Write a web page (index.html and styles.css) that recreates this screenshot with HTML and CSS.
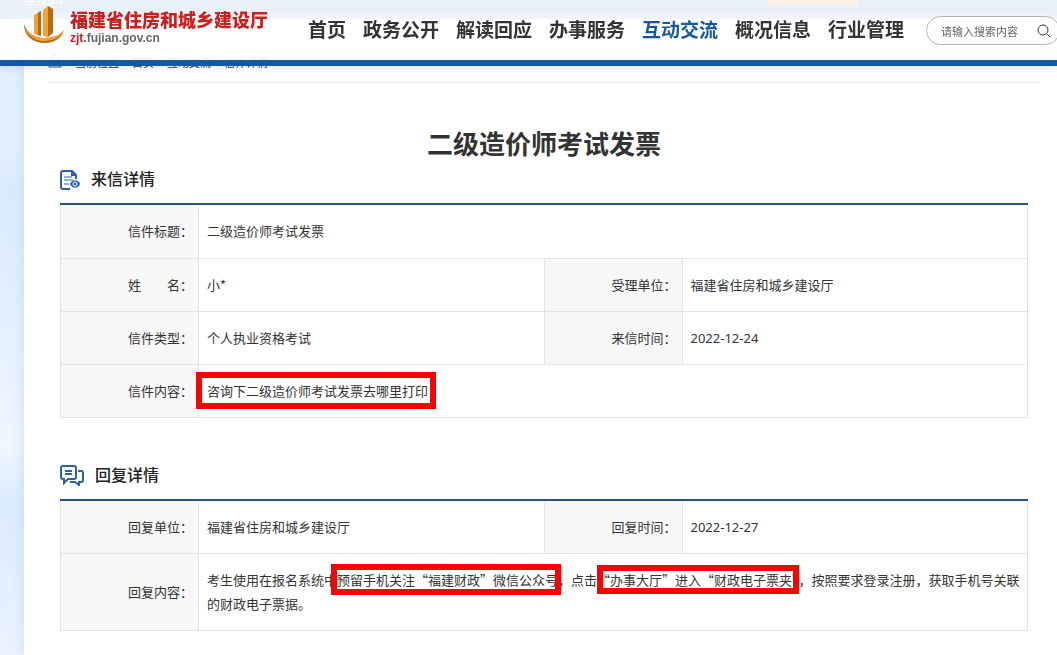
FILE: index.html
```html
<!DOCTYPE html>
<html lang="zh-CN">
<head>
<meta charset="UTF-8">
<meta name="viewport" content="width=device-width, initial-scale=1.0">
<title>二级造价师考试发票</title>
<link rel="stylesheet" href="styles.css">
</head>
<body>
<header class="header">
<a class="logo" href="#">
<svg class="logo-icon" viewBox="0 0 40 38" aria-hidden="true">
<path d="M10 9l7-4v25l-7-2z" fill="#f2a238"/>
<path d="M14 7l3-2v25l-3-1z" fill="#b96a17"/>
<path d="M19 4l5-4v31l-5-1z" fill="#f2a238"/>
<path d="M24 0l5 3v24l-5 4z" fill="#b96a17"/>
<path d="M0 18c3 9 11 14 20 14s17-3 20-8c-2 8-10 13-19 13C9 37 0 30 0 18z" fill="#b96a17"/>
<path d="M0 18c3 9 11 14 20 14s17-3 20-8c-3 7-11 11-20 11C10 35 2 28 0 18z" fill="#f2a238"/>
</svg>
<span class="logo-text">
<strong>福建省住房和城乡建设厅</strong>
<span class="logo-url"><b>zjt</b>.fujian.gov.cn</span>
</span>
</a>
<nav class="nav">
<a href="#">首页</a>
<a href="#">政务公开</a>
<a href="#">解读回应</a>
<a href="#">办事服务</a>
<a href="#" class="active">互动交流</a>
<a href="#">概况信息</a>
<a href="#">行业管理</a>
</nav>
<form class="search">
<input type="text" placeholder="请输入搜索内容" aria-label="请输入搜索内容">
<button type="button" aria-label="搜索">
<svg viewBox="0 0 14 14" aria-hidden="true"><circle cx="6" cy="6" r="5"/><path d="M10 10l3 3"/></svg>
</button>
</form>
</header>

<div class="banner">
<span class="weekday">星期四</span>
<span class="banner-btn"></span>
</div>

<main class="page">
<div class="crumbs">
<svg viewBox="0 0 14 14" aria-hidden="true"><path d="M4 9H1v4h12V9h-3M7 11C4 8 3 6 3 5a4 4 0 0 1 8 0c0 1-1 3-4 6z"/></svg>
<span>当前位置</span>
<a href="#">首页</a>
<a href="#">互动交流</a>
<span>信件详情</span>
</div>

<article class="letter">
<h1>二级造价师考试发票</h1>

<h2>
<svg class="icon-doc" viewBox="0 0 20 20" aria-hidden="true">
<path d="M10 19H3a2 2 0 0 1-2-2V3a2 2 0 0 1 2-2h9l4 4v4"/>
<path d="M12 1v4h4" />
<path class="lines" d="M4 7h8M4 10h9M4 14h5"/>
<path class="eye" d="M10 14c2-5 8-5 10 0-2 5-8 5-10 0z"/>
<circle class="pupil" cx="15" cy="14" r="2"/>
</svg>
来信详情
</h2>
<table>
<colgroup><col class="col-label"><col><col class="col-label"><col></colgroup>
<tr>
<th>信件标题：</th>
<td colspan="3">二级造价师考试发票</td>
</tr>
<tr>
<th>姓　　名：</th>
<td>小*</td>
<th>受理单位：</th>
<td>福建省住房和城乡建设厅</td>
</tr>
<tr>
<th>信件类型：</th>
<td>个人执业资格考试</td>
<th>来信时间：</th>
<td class="date">2022-12-24</td>
</tr>
<tr>
<th>信件内容：</th>
<td colspan="3"><span class="mark mark-question">咨询下二级造价师考试发票去哪里打印</span></td>
</tr>
</table>

<h2 class="reply-title">
<svg class="icon-chat" viewBox="0 0 24 21" aria-hidden="true">
<path d="M3 1h11a2 2 0 0 1 2 2v9a2 2 0 0 1-2 2H8l-4 4v-4H3a2 2 0 0 1-2-2V3a2 2 0 0 1 2-2z"/>
<path d="M5 6h7M5 9h7M18 6h3a2 2 0 0 1 2 2v7a2 2 0 0 1-2 2h-2v3l-4-3h-5"/>
</svg>
回复详情
</h2>
<table>
<colgroup><col class="col-label"><col><col class="col-label"><col></colgroup>
<tr>
<th>回复单位：</th>
<td>福建省住房和城乡建设厅</td>
<th>回复时间：</th>
<td class="date">2022-12-27</td>
</tr>
<tr>
<th>回复内容：</th>
<td colspan="3" class="content">考生使用在报名系统中<span class="mark mark-follow">预留手机关注“福建财政”微信公众号</span>，点击<span class="mark mark-hall">“办事大厅”进入“财政电子票夹”</span>，按照要求登录注册，获取手机号关联的财政电子票据。</td>
</tr>
</table>
</article>
</main>
</body>
</html>
```
FILE: styles.css
```css
* {
box-sizing: border-box;
}
body {
margin: 0;
font-family: "Noto Sans CJK SC", sans-serif;
font-size: 13px;
line-height: 24px;
color: #333;
background: linear-gradient(#e0eeff 0, #e4f0ff 150px, #dae9fd 190px, #e2efff 300px, #eff7ff 450px, #dceaff 500px, #eaf3ff 655px);
overflow-x: hidden;
}
a {
color: inherit;
text-decoration: none;
}

/* 顶部导航 */
.header {
position: fixed;
top: 0;
left: 0;
right: 0;
z-index: 10;
height: 66px;
padding-left: 24px;
display: flex;
align-items: flex-start;
overflow: hidden;
background: rgba(255, 255, 255, 0.9);
border-bottom: 6px solid #1558a2;
box-shadow: 0 2px 8px rgba(0, 0, 0, 0.1);
}
.logo {
flex: none;
width: 284px;
display: flex;
gap: 6px;
padding-top: 6px;
}
.logo-icon {
flex: none;
width: 40px;
height: 38px;
}
.logo-text {
display: flex;
flex-direction: column;
white-space: nowrap;
}
.logo-text strong {
font-size: 18px;
font-weight: 900;
line-height: 26px;
color: #cc1f1d;
}
.logo-url {
font-family: "Liberation Sans", sans-serif;
font-size: 12px;
font-weight: bold;
line-height: 12px;
color: #666;
}
.logo-url b {
color: #cc1f1d;
}
.nav {
flex: none;
display: flex;
gap: 17px;
padding-top: 15px;
font-size: 19px;
font-weight: bold;
line-height: 28px;
white-space: nowrap;
}
.nav .active {
color: #1558a2;
}
.search {
flex: none;
width: 134px;
height: 29px;
margin: 16px 0 0 22px;
padding: 0 8px 0 14px;
display: flex;
align-items: center;
background: #fff;
border: 1px solid #b5b5b5;
border-radius: 15px;
}
.search input {
flex: 1;
min-width: 0;
padding: 0;
border: none;
outline: none;
background: none;
font-family: inherit;
font-size: 11px;
}
.search input::placeholder {
color: #666;
}
.search button {
width: 14px;
height: 14px;
padding: 0;
border: none;
background: none;
cursor: pointer;
}
.search svg {
display: block;
fill: none;
stroke: #333;
}

.banner {
height: 19px;
padding: 0 199px 0 24px;
display: flex;
justify-content: space-between;
overflow: hidden;
background: #2565b9;
}
.weekday {
margin-top: -14px;
color: #fff;
}
.banner-btn {
width: 90px;
height: 5px;
background: #ff7a2c;
}

/* 正文 */
.page {
min-height: 636px;
margin-left: 24px;
padding: 32px 17px 24px 24px;
background: #fff;
box-shadow: 0 0 12px #c6dcf5;
}
.crumbs {
height: 32px;
display: flex;
gap: 13px;
border-bottom: 1px solid #ebebeb;
font-size: 11px;
line-height: 22px;
}
.crumbs svg {
width: 14px;
height: 14px;
margin-top: 3px;
fill: none;
stroke: #1558a2;
}
.letter {
padding: 42px 12px 0;
}
h1 {
margin: 0;
font-size: 26px;
line-height: 36px;
text-align: center;
}
h2 {
height: 42px;
margin: 0;
padding-bottom: 8px;
display: flex;
align-items: center;
font-size: 16px;
font-weight: 500;
color: #222;
}
h2 svg {
margin-top: 3px;
margin-right: 11px;
fill: none;
stroke: #2b62a5;
stroke-width: 2;
}
.icon-doc {
width: 20px;
height: 20px;
}
.icon-doc .lines {
stroke-width: 1;
}
.icon-doc .eye {
fill: #2b62a5;
stroke: none;
}
.icon-doc .pupil {
fill: #2b62a5;
stroke: #fff;
stroke-width: 1;
}
.icon-chat {
width: 24px;
height: 21px;
}
.reply-title {
margin-top: 39px;
}
table {
width: 100%;
table-layout: fixed;
border-collapse: collapse;
border-top: 2px solid #285286;
}
.col-label {
width: 138px;
}
th,
td {
height: 53px;
padding: 14px 0 14px 8px;
border: 1px solid #e3e3e3;
border-top: none;
font-weight: normal;
text-align: left;
}
tr:first-child th {
height: 54px;
}
th {
padding-right: 5px;
background: #f7f7f7;
text-align: right;
}
.date {
font-family: "Noto Sans", sans-serif;
}

/* 红框标注 */
.mark {
position: relative;
}
.mark::after {
content: "";
position: absolute;
border: 6px solid #fe0000;
}
.mark-question::after {
inset: -9px -8px -9px -11px;
}
.mark-follow::after {
inset: -6px -3px -6px -6px;
}
.mark-hall::after {
inset: -5px 0 -5px 0;
}
```
